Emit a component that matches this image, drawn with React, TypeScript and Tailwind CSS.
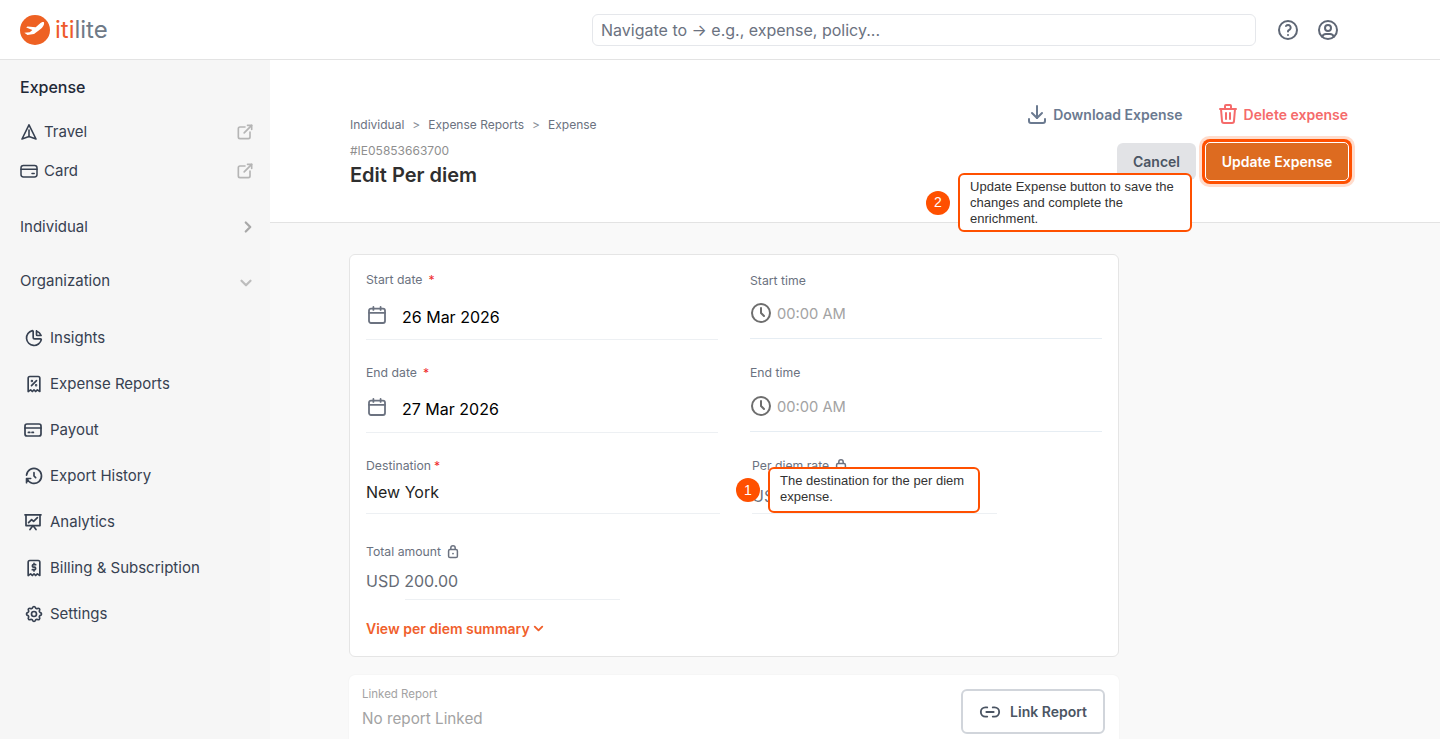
import React from "react";
import {
  TbExternalLink, TbChevronRight, TbChevronDown, TbChartPie, TbReceiptTax, TbHistory,
  TbReceipt2, TbSettings, TbClock, TbDownload, TbTrash, TbHelp, TbUserCircle,
} from "react-icons/tb";
import { Link2 } from "lucide-react";

const Lock = () => (
  <svg viewBox="0 0 12 14" className="h-[14px] w-[12px] text-[#6b7280]" fill="none" stroke="currentColor" strokeWidth="1.5">
    <rect x="1.6" y="4.6" width="8.8" height="8" rx="1.4" />
    <path d="M3.8 4.6V3a2.2 2.2 0 0 1 4.4 0v1.6" />
    <circle cx="6" cy="8.6" r="0.9" fill="currentColor" stroke="none" />
  </svg>
);

const Logo = () => (
  <svg viewBox="0 0 30 30" className="h-[30px] w-[30px]">
    <circle cx="15" cy="15" r="15" fill="#ee6123" />
    <path d="M24 7.2c-1.3-.4-2.9.2-4.3 1.5l-4 3.6-8.2-.9-1.3 1 6.2 2.5-2.7 2.4-5.4.5 3.2 2.3 6.5-1 6-4.5c2.6-2 4.8-5.3 3.9-7.4z" fill="#fff" />
  </svg>
);

const Travel = () => (
  <svg viewBox="0 0 18 18" className="h-[18px] w-[18px]" fill="none" stroke="#374151" strokeWidth="1.6" strokeLinejoin="round" strokeLinecap="round">
    <path d="M9 1.8 2 16l7-2.4L16 16 9 1.8z" />
    <path d="M9 7v6.6" />
  </svg>
);

const Card = () => (
  <svg viewBox="0 0 18 18" className="h-[18px] w-[18px]" fill="none" stroke="#374151" strokeWidth="1.5" strokeLinecap="round">
    <rect x="1" y="3.4" width="16" height="11.6" rx="2.4" />
    <path d="M1 7.2h16" />
    <path d="M12 11.6h2.2" />
  </svg>
);

const Payout = () => (
  <svg viewBox="0 0 18 18" className="h-[18px] w-[18px]" fill="none" stroke="#374151" strokeWidth="1.7" strokeLinecap="round">
    <rect x="1" y="3" width="16" height="12" rx="2" />
    <path d="M1 7h16" />
    <path d="M4.4 11.4h1.4M8 11.4h1.4" />
  </svg>
);

const Analytics = () => (
  <svg viewBox="0 0 18 18" className="h-[18px] w-[18px]" fill="none" stroke="#374151" strokeWidth="1.7" strokeLinecap="round" strokeLinejoin="round">
    <path d="M1 1.8h16" />
    <path d="M2 1.8v10.8h14V1.8" />
    <path d="M4.6 9.6l3-3 2 1.8 3.8-3.8" />
    <path d="M6 16.6l3-4 3 4" />
  </svg>
);

const Calendar = () => (
  <svg viewBox="0 0 18 18" className="h-[18px] w-[18px] text-[#6b7280]" fill="none" stroke="currentColor" strokeWidth="1.8" strokeLinecap="round">
    <rect x="1" y="2.6" width="16" height="14.4" rx="2" />
    <path d="M1 6.8h16" />
    <path d="M5.4 0.9v3M12.6 0.9v3" />
  </svg>
);

const items: [string, React.ReactNode][] = [
  ["Insights", <TbChartPie size={20} />],
  ["Expense Reports", <TbReceiptTax size={20} />],
  ["Payout", <Payout />],
  ["Export History", <TbHistory size={20} />],
  ["Analytics", <Analytics />],
  ["Billing & Subscription", <TbReceipt2 size={20} />],
  ["Settings", <TbSettings size={20} />],
];

const Label = ({ children }: { children: React.ReactNode }) => (
  <div className="flex h-5 items-center gap-1.5 text-[12.25px] leading-5 text-[#6b7280]">{children}</div>
);

const DateField = ({ label, value, first }: { label: string; value: string; first?: boolean }) => (
  <div className="w-[352px]">
    <Label>{label}<span className="text-[#ef2b2b]">*</span></Label>
    <div className={first ? "mt-[11px] flex h-[32px] items-center gap-[16px]" : "mt-[10px] flex h-[32px] items-center gap-[16px]"}>
      <span className="-mt-1 ml-[2px]"><Calendar /></span>
      <span className="text-[16px] text-black">{value}</span>
    </div>
    <div className={first ? "mt-[6px] h-px bg-[#edf0f3]" : "mt-[7px] h-px bg-[#edf0f3]"} />
  </div>
);

const TimeField = ({ label, first }: { label: string; first?: boolean }) => (
  <div className="w-[352px]">
    <div className={first ? "mt-[1px]" : ""}><Label>{label}</Label></div>
    <div className={first ? "mt-[6px] flex h-[32px] items-center gap-[4px]" : "mt-[7px] flex h-[32px] items-center gap-[4px]"}>
      <TbClock size={24} className="-ml-[1px] text-[#6e6e6e]" />
      <span className="mt-[2px] text-[14.7px] text-[#a3a3a3]">00:00 AM</span>
    </div>
    <div className="mt-[9px] h-px bg-[#e6edf3]" />
  </div>
);

export default function App() {
  return (
    <div className="relative flex h-[739px] w-[1440px] flex-col overflow-hidden bg-white font-['Inter',sans-serif]">
      <header className="flex h-[60px] shrink-0 items-center border-b border-[#e3e3e3] bg-white">
        <div className="flex w-[592px] items-center gap-[5px] pl-5">
          <Logo />
          <span className="text-[24px] leading-none font-normal">
            <span className="text-[#ee5a2a]">iti</span>
            <span className="text-[#6f7a87]">lite</span>
          </span>
        </div>
        <div className="flex h-[32px] w-[664px] items-center rounded-md border border-[#e5e7eb] bg-white pl-2 text-[16px] text-[#6b7280]">
          Navigate to → e.g., expense, policy...
        </div>
        <div className="ml-[20px] flex items-center gap-[16px] text-[#5f6775]">
          <TbHelp size={24} />
          <TbUserCircle size={24} />
        </div>
      </header>

      <div className="flex min-h-0 flex-1">
        <aside className="w-[270px] shrink-0 bg-[#f6f6f6] pt-[17px] text-[#374151]">
          <div className="px-5 text-[16px] leading-5 font-medium text-[#1f2937]">Expense</div>
          <div className="mt-[25px] flex h-5 items-center pr-[15px] pl-5 text-[15px]">
            <Travel /><span className="ml-[6px] flex-1">Travel</span>
            <TbExternalLink size={20} className="text-[#b5b5b5]" />
          </div>
          <div className="mt-[19px] flex h-5 items-center pr-[15px] pl-5 text-[15px]">
            <Card /><span className="ml-[6px] flex-1">Card</span>
            <TbExternalLink size={20} className="text-[#b5b5b5]" />
          </div>
          <div className="mt-[36px] flex h-5 items-center pr-[13px] pl-5 text-[15px]">
            <span className="flex-1">Individual</span>
            <TbChevronRight size={18} strokeWidth={3} className="text-[#a8a8a8]" />
          </div>
          <div className="mt-[34px] flex h-5 items-center pr-[15px] pl-5 text-[15px]">
            <span className="flex-1">Organization</span>
            <TbChevronDown size={18} strokeWidth={3} className="mt-1 text-[#bdbdbd]" />
          </div>
          <div className="mt-[37px] flex flex-col gap-[26px]">
            {items.map(([t, ic]) => (
              <div key={t} className="flex h-5 items-center pl-[24px] text-[15px] text-[#374151]">
                <span className="flex w-[26px] items-center">{ic}</span>
                <span>{t}</span>
              </div>
            ))}
          </div>
        </aside>

        <main className="min-w-0 flex-1 bg-[#f9f9f9]">
          <div className="flex h-[163px] border-b border-[#e3e3e3] bg-white pr-[92px] pl-20">
            <div className="flex-1 pt-[55px]">
              <div className="flex h-5 items-center text-[12px] text-[#6b7280]">
                <span>Individual</span><span className="mx-[8px] text-[#8a8f98]">&gt;</span>
                <span>Expense Reports</span><span className="mx-[8px] text-[#8a8f98]">&gt;</span>
                <span>Expense</span>
              </div>
              <div className="mt-[6px] h-5 text-[12px] leading-5 text-[#8f8f8f]">#IE05853663700</div>
              <div className="text-[20px] leading-7 font-semibold text-[#2f2f2f]">Edit Per diem</div>
            </div>
            <div className="flex flex-col items-end pt-[42px]">
              <div className="flex h-6 items-center text-[14px] font-semibold">
                <TbDownload size={24} className="text-[#6b7a90]" />
                <span className="ml-[4px] text-[#6b7a90]">Download Expense</span>
                <TbTrash size={24} className="ml-[33px] text-[#f56b6b]" />
                <span className="ml-[4px] text-[#f56b6b]">Delete expense</span>
              </div>
              <div className="mt-[17px] flex items-start">
                <div className="flex h-[37px] w-[79px] items-center justify-center rounded-md bg-[#e2e3e6] text-[14px] font-semibold text-[#4b5563]">Cancel</div>
                <div className="ml-[10px] flex h-[37px] w-[142px] items-center justify-center rounded-[4px] bg-[#dd6b20] text-[14px] font-semibold text-white outline-1 outline-white shadow-[0_0_0_4px_#ff5000,0_0_0_7px_rgba(255,80,0,0.2)]">Update Expense</div>
              </div>
            </div>
          </div>

          <div className="pt-[31px] pl-[79px]">
            <section className="h-[403px] w-[770px] rounded-md border border-[#e5e5e5] bg-white pt-[15px] pl-4">
              <div className="flex gap-8">
                <DateField first label="Start date" value="26 Mar 2026" />
                <TimeField first label="Start time" />
              </div>
              <div className="mt-[23px] flex gap-8">
                <DateField label="End date" value="27 Mar 2026" />
                <TimeField label="End time" />
              </div>
              <div className="mt-[23px] flex">
                <div className="w-[354px]">
                  <Label>Destination<span className="-ml-[3px] text-[#ef2b2b]">*</span></Label>
                  <div className="mt-[2px] h-[28px] text-[16px] leading-7 text-[#1f1f1f]">New York</div>
                  <div className="mt-[7px] h-px bg-[#edf0f3]" />
                </div>
                <div className="ml-[32px] w-[245px]">
                  <Label>Per diem rate <Lock /></Label>
                  <div className="mt-[6px] h-[28px] text-[16px] leading-7 text-[#6b7280]">USD 100</div>
                  <div className="mt-[3px] h-px bg-[#edf0f3]" />
                </div>
              </div>
              <div className="mt-[28px] w-[254px]">
                <Label>Total amount <Lock /></Label>
                <div className="mt-[5px] flex h-[28px] items-center text-[16px] text-[#666b75]">USD 200.00</div>
                <div className="mt-[4px] ml-[39px] h-px bg-[#edf0f3]" />
              </div>
              <div className="mt-[18px] flex h-5 items-center text-[14px] font-semibold text-[#f0602c]">
                View per diem summary
                <TbChevronDown size={15} strokeWidth={3} className="ml-[1px]" />
              </div>
            </section>

            <section className="mt-[18px] flex h-[100px] w-[770px] items-start justify-between rounded-md bg-white pr-[14px] pl-[13px] shadow-[0_0_2px_rgba(0,0,0,0.06)]">
              <div className="pt-[10px]">
                <div className="h-[18px] text-[11.5px] leading-[18px] text-[#a3a3a3]">Linked Report</div>
                <div className="mt-[4px] text-[15.25px] leading-6 text-[#a3a3a3]">No report Linked</div>
              </div>
              <div className="mt-[14px] flex h-[45px] w-[144px] items-center justify-center gap-[9px] rounded-md border-2 border-[#d1d5db] bg-white text-[14px] font-semibold text-[#4b5563]">
                <Link2 size={22} strokeWidth={2} />
                Link Report
              </div>
            </section>
          </div>
        </main>
      </div>

      {/* Walkthrough callouts */}
      <div className="absolute top-[467px] left-[736px] flex items-center font-['Liberation_Sans',sans-serif]">
        <div className="flex h-6 w-6 items-center justify-center rounded-full bg-[#ff5000] text-[14px] text-white">1</div>
        <div className="ml-2 h-[46px] w-[212px] rounded-md border-2 border-[#ff5000] bg-white px-[10px] pt-[4px] text-[13px] tracking-[0.02px] leading-4 text-[#333]">
          The destination for the per diem expense.
        </div>
      </div>
      <div className="absolute top-[173px] left-[926px] flex items-center font-['Liberation_Sans',sans-serif]">
        <div className="flex h-6 w-6 items-center justify-center rounded-full bg-[#ff5000] text-[14px] text-white">2</div>
        <div className="ml-2 h-[59px] w-[234px] rounded-md border-2 border-[#ff5000] bg-white px-[10px] pt-[4px] text-[13px] tracking-[0.02px] leading-4 text-[#333]">
          Update Expense button to save the changes and complete the enrichment.
        </div>
      </div>
    </div>
  );
}
